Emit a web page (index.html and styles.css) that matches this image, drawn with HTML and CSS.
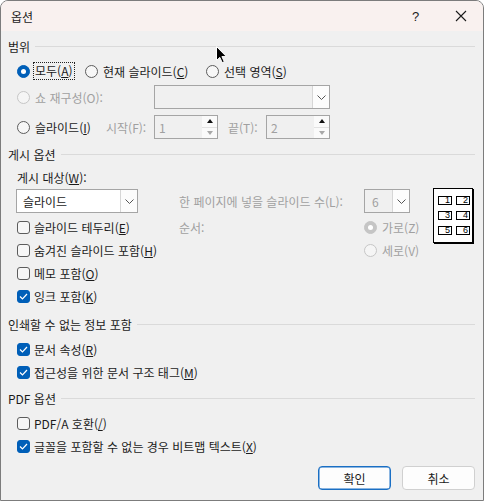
FILE: index.html
```html
<!DOCTYPE html>
<html lang="ko">
<head>
<meta charset="utf-8">
<link rel="stylesheet" href="styles.css">
</head>
<body>
<div class="window">
  <div class="titlebar">
    <span class="title">옵션</span>
    <span class="tbtn help">?</span>
    <span class="tbtn close"><svg width="12" height="12" viewBox="0 0 12 12"><path d="M1 1 L11 11 M11 1 L1 11" stroke="#1b1b1b" stroke-width="1.1" fill="none"/></svg></span>
  </div>

  <div class="content">
    <div class="ghead mt6"><span>범위</span><i></i></div>

    <div class="row r20 mt6">
      <span class="opt w68"><span class="radio on"></span><span class="focus">모두(<u>A</u>)</span></span>
      <span class="opt w121"><span class="radio"></span><span class="lbl">현재 슬라이드(<u>C</u>)</span></span>
      <span class="opt"><span class="radio"></span><span class="lbl">선택 영역(<u>S</u>)</span></span>
    </div>

    <div class="row r24 mt4">
      <span class="opt w137 dim"><span class="radio dis"></span><span class="lbl">쇼 재구성(O):</span></span>
      <span class="combo dis w176"><span class="cval"></span><span class="cbtn"><svg width="9" height="5" viewBox="0 0 9 5"><path d="M0.5 0.5 L4.5 4.5 L8.5 0.5" stroke="#555" fill="none"/></svg></span></span>
    </div>

    <div class="row r24 mt6">
      <span class="opt w89"><span class="radio"></span><span class="lbl">슬라이드(<u>I</u>)</span></span>
      <span class="dim w48">시작(F):</span>
      <span class="spin"><span class="sval">1</span><span class="sbtns"><span class="up"></span><span class="down"></span></span></span>
      <span class="dim w38 ml10">끝(T):</span>
      <span class="spin"><span class="sval">2</span><span class="sbtns"><span class="up"></span><span class="down"></span></span></span>
    </div>

    <div class="ghead mt6"><span>게시 옵션</span><i></i></div>
    <div class="row r18 mt5 ind">게시 대상(<u>W</u>):</div>

    <div class="publish mt3">
      <div class="pub-left">
        <span class="combo w122"><span class="cval white">슬라이드</span><span class="cbtn"><svg width="9" height="5" viewBox="0 0 9 5"><path d="M0.5 0.5 L4.5 4.5 L8.5 0.5" stroke="#555" fill="none"/></svg></span></span>
        <div class="crow mt3"><span class="check"></span><span>슬라이드 테두리(<u>E</u>)</span></div>
        <div class="crow"><span class="check"></span><span>숨겨진 슬라이드 포함(<u>H</u>)</span></div>
        <div class="crow"><span class="check"></span><span>메모 포함(<u>O</u>)</span></div>
        <div class="crow"><span class="check on"><svg width="9" height="7" viewBox="0 0 9 7"><path d="M1 3.5 L3.5 6 L8 1" stroke="#fff" stroke-width="1.2" fill="none"/></svg></span><span>잉크 포함(<u>K</u>)</span></div>
      </div>
      <div class="pub-right">
        <div class="prow r24">
          <span class="dim w185">한 페이지에 넣을 슬라이드 수(L):</span>
          <span class="combo dis w46"><span class="cval gray">6</span><span class="cbtn"><svg width="9" height="5" viewBox="0 0 9 5"><path d="M0.5 0.5 L4.5 4.5 L8.5 0.5" stroke="#555" fill="none"/></svg></span></span>
        </div>
        <div class="prow r23 mt3">
          <span class="dim w185">순서:</span>
          <span class="opt dim"><span class="radio dison"></span><span class="lbl">가로(Z)</span></span>
        </div>
        <div class="prow r23 pl185">
          <span class="opt dim"><span class="radio dis"></span><span class="lbl">세로(V)</span></span>
        </div>
      </div>
      <div class="preview">
        <span class="pg">1</span><span class="pg">2</span>
        <span class="pg">3</span><span class="pg">4</span>
        <span class="pg">5</span><span class="pg">6</span>
      </div>
    </div>

    <div class="ghead mt7"><span>인쇄할 수 없는 정보 포함</span><i></i></div>
    <div class="crow mt5"><span class="check on"><svg width="9" height="7" viewBox="0 0 9 7"><path d="M1 3.5 L3.5 6 L8 1" stroke="#fff" stroke-width="1.2" fill="none"/></svg></span><span>문서 속성(<u>R</u>)</span></div>
    <div class="crow"><span class="check on"><svg width="9" height="7" viewBox="0 0 9 7"><path d="M1 3.5 L3.5 6 L8 1" stroke="#fff" stroke-width="1.2" fill="none"/></svg></span><span>접근성을 위한 문서 구조 태그(<u>M</u>)</span></div>

    <div class="ghead mt5"><span>PDF 옵션</span><i></i></div>
    <div class="crow mt5"><span class="check"></span><span>PDF/A 호환(<u>/</u>)</span></div>
    <div class="crow"><span class="check on"><svg width="9" height="7" viewBox="0 0 9 7"><path d="M1 3.5 L3.5 6 L8 1" stroke="#fff" stroke-width="1.2" fill="none"/></svg></span><span>글꼴을 포함할 수 없는 경우 비트맵 텍스트(<u>X</u>)</span></div>

    <div class="buttons">
      <span class="btn primary">확인</span>
      <span class="btn">취소</span>
    </div>
  </div>

  <svg class="cursor" width="12" height="18" viewBox="0 0 12 18"><path d="M0.5 0.5 V14.5 L3.8 11.4 L6.2 16.6 L8.3 15.7 L5.9 10.6 H10.4 Z" fill="#000" stroke="#fff" stroke-width="1"/></svg>
</div>
</body>
</html>
```

FILE: styles.css
```css
html, body { margin: 0; padding: 0; background: #ffffff; }

.window {
  position: relative;
  width: 484px;
  height: 501px;
  box-sizing: border-box;
  border: 1px solid #7c7c7c;
  border-radius: 8px 8px 0 0;
  background: #f0f0f0;
  overflow: hidden;
  font-family: "Noto Sans CJK KR", "Noto Sans", sans-serif;
  font-size: 12px;
  color: #1b1b1b;
}

.titlebar {
  height: 30px;
  background: #f9f1ef;
  display: flex;
  align-items: center;
  padding-left: 10px;
}
.title { flex: 1; font-size: 12px; }
.tbtn {
  width: 45px;
  height: 30px;
  display: flex;
  align-items: center;
  justify-content: center;
}
.help { font-family: "Liberation Sans", sans-serif; font-size: 13px; }

.content { padding: 0 7px 0 7px; }

.ghead { display: flex; align-items: center; height: 18px; gap: 5px; }
.ghead i { flex: 1; height: 1px; background: #dadada; margin-right: 1px; }

.mt3 { margin-top: 3px; }
.mt4 { margin-top: 4px; }
.mt5 { margin-top: 5px; }
.mt6 { margin-top: 6px; }
.mt7 { margin-top: 7px; }
.ml10 { margin-left: 10px; }

.row { display: flex; align-items: center; padding-left: 9px; }
.prow { display: flex; align-items: center; }
.r18 { height: 18px; }
.r20 { height: 20px; }
.r23 { height: 23px; }
.r24 { height: 24px; }
.ind { padding-left: 9px; }

.opt { display: flex; align-items: center; flex: none; white-space: nowrap; }
.w38 { width: 38px; flex: none; }
.w46 { width: 46px; flex: none; }
.w48 { width: 48px; flex: none; }
.w68 { width: 68px; }
.w89 { width: 89px; }
.w121 { width: 121px; }
.w122 { width: 122px; flex: none; }
.w137 { width: 137px; }
.w176 { width: 176px; flex: none; }
.w185 { width: 185px; flex: none; white-space: nowrap; }
.pl185 { padding-left: 185px; }

.dim { color: #a0a0a0; }

.radio {
  width: 13px;
  height: 13px;
  box-sizing: border-box;
  border-radius: 50%;
  border: 1px solid #5c5c5c;
  background: #f7f7f7;
  flex: none;
  margin-right: 3px;
  position: relative;
}
.radio.on { background: #005fb8; border-color: #005fb8; }
.radio.on::after, .radio.dison::after {
  content: "";
  position: absolute;
  left: 3px; top: 3px;
  width: 5px; height: 5px;
  border-radius: 50%;
  background: #fff;
}
.radio.dis { border-color: #c6c6c6; background: #f5f5f5; }
.radio.dison { background: #c5c5c5; border-color: #c5c5c5; }

.lbl { padding: 0 2px; }
.focus { border: 1px dotted #222; padding: 0 1px; line-height: 16px; }

u { text-decoration: underline; text-underline-offset: 1px; }

.combo {
  display: flex;
  height: 24px;
  box-sizing: border-box;
  border: 1px solid #a5a5a5;
  background: #ffffff;
}
.combo.dis { background: #f0f0f0; }
.cval { flex: 1; display: flex; align-items: center; padding-left: 6px; }
.cval.gray { color: #a0a0a0; padding-left: 7px; }
.cbtn {
  width: 16px;
  border-left: 1px solid #d6d6d6;
  background: #fcfcfc;
  display: flex;
  align-items: center;
  justify-content: center;
}

.spin {
  display: flex;
  width: 64px;
  height: 24px;
  box-sizing: border-box;
  border: 1px solid #a5a5a5;
  background: #f0f0f0;
  flex: none;
}
.sval { flex: 1; display: flex; align-items: center; padding-left: 4px; color: #a0a0a0; }
.sbtns { width: 15px; display: flex; flex-direction: column; background: #fafafa; }
.sbtns span { flex: 1; display: flex; align-items: center; justify-content: center; }
.up::before {
  content: "";
  border-left: 3.5px solid transparent;
  border-right: 3.5px solid transparent;
  border-bottom: 4px solid #111;
}
.down { border-top: 1px solid #e2e2e2; }
.down::before {
  content: "";
  border-left: 3.5px solid transparent;
  border-right: 3.5px solid transparent;
  border-top: 4px solid #a8a8a8;
}

.publish { display: flex; align-items: flex-start; padding-left: 8px; }
.pub-left { width: 163px; flex: none; }
.pub-right { width: 230px; flex: none; }

.crow { display: flex; align-items: center; height: 23px; white-space: nowrap; }
.content > .crow { padding-left: 8px; }
.check {
  width: 13px;
  height: 13px;
  box-sizing: border-box;
  border: 1px solid #5c5c5c;
  border-radius: 3px;
  background: #f7f7f7;
  margin-right: 4px;
  margin-left: 1px;
  flex: none;
  display: flex;
  align-items: center;
  justify-content: center;
}
.check.on { background: #005fb8; border-color: #005fb8; }

.preview {
  margin-left: 24px;
  margin-top: -1px;
  width: 40px;
  height: 55px;
  box-sizing: border-box;
  border: 1px solid #000;
  background: #fff;
  box-shadow: 1px 1px 0 #000;
  display: grid;
  grid-template-columns: 14px 14px;
  grid-template-rows: 9px 9px 9px;
  column-gap: 4px;
  row-gap: 6px;
  padding: 7px 0 0 4px;
}
.pg {
  box-sizing: border-box;
  border: 1px solid #000;
  font-family: "Liberation Sans", sans-serif;
  font-size: 9px;
  line-height: 7px;
  text-align: right;
  padding-right: 1px;
  color: #000;
}

.buttons { display: flex; justify-content: flex-end; gap: 11px; margin-top: 8px; padding-right: 1px; }
.btn {
  width: 73px;
  height: 24px;
  box-sizing: border-box;
  border: 1px solid #d0d0d0;
  border-radius: 4px;
  background: #fdfdfd;
  display: flex;
  align-items: center;
  justify-content: center;
}
.btn.primary { border-color: #1a6fc4; box-shadow: inset 0 0 0 0.5px #1a6fc4; }

.cursor { position: absolute; left: 215px; top: 45px; }
```
